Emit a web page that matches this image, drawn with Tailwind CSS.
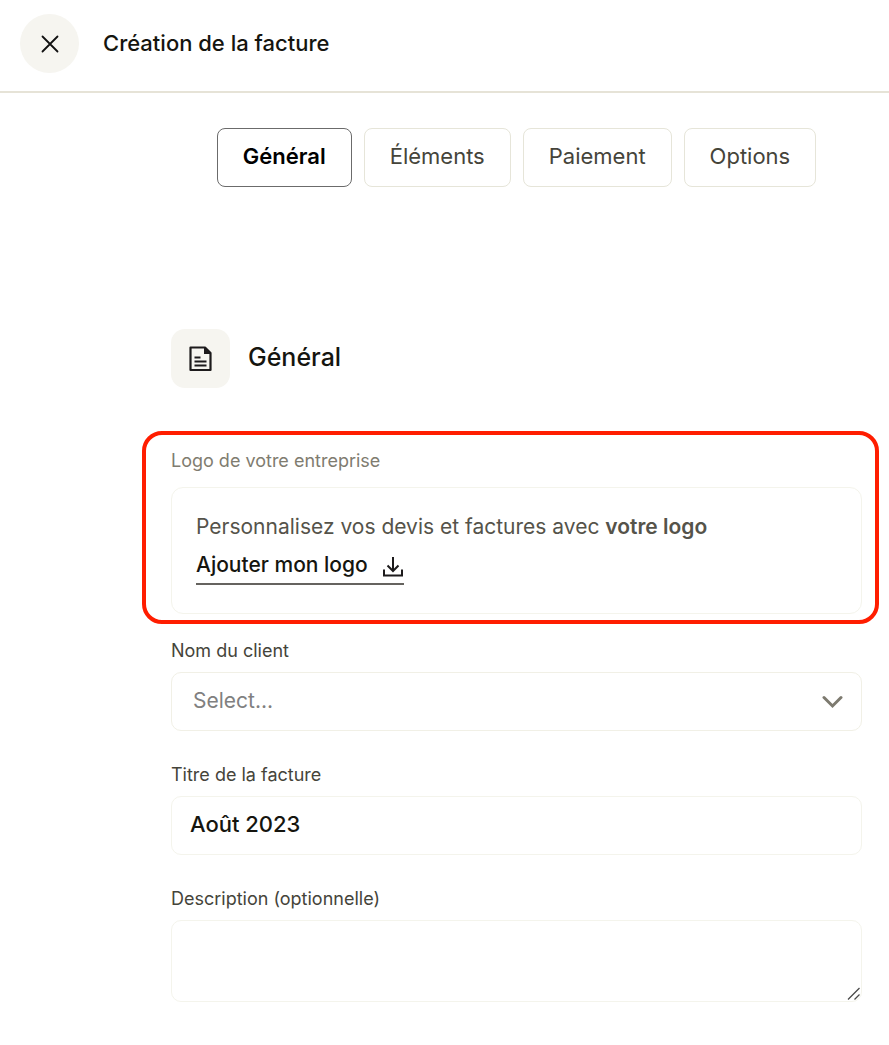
<!DOCTYPE html>
<html lang="fr">
<head>
  <meta charset="UTF-8">
  <meta name="viewport" content="width=device-width, initial-scale=1.0">
  <title>Création de la facture</title>
  <script src="https://cdn.jsdelivr.net/npm/@tailwindcss/browser@4"></script>
</head>
<body class="bg-white min-h-screen font-['Inter',sans-serif] text-[#15150f]">
  <header class="flex items-center gap-6 h-[93px] pl-[20px] pb-[4px] border-b-2 border-[#e6e3d7]">
    <button type="button" aria-label="Fermer" class="flex items-center justify-center size-[59px] rounded-full bg-[#f6f5f0]">
      <svg class="size-[18px]" viewBox="0 0 18 18" fill="none" stroke="#111111" stroke-width="1.8" stroke-linecap="round">
        <path d="M1.5 1.5l15 15M16.5 1.5l-15 15" />
      </svg>
    </button>
    <h1 class="pb-[2px] text-[22px] leading-7 font-medium">Création de la facture</h1>
  </header>

  <main class="pt-[35px] pl-[171px] pr-[27px] pb-[42px]">
    <nav class="flex justify-center gap-3 text-[22px] leading-7 text-[#45443a]">
      <button type="button" class="h-[59px] px-[25px] pb-[3px] rounded-lg border border-[#6b6b6b] font-semibold text-black">Général</button>
      <button type="button" class="h-[59px] px-[25px] pb-[3px] rounded-lg border border-[#e6e5d9]">Éléments</button>
      <button type="button" class="h-[59px] px-[25px] pb-[3px] rounded-lg border border-[#e6e5d9]">Paiement</button>
      <button type="button" class="h-[59px] px-[25px] pb-[3px] rounded-lg border border-[#e6e5d9]">Options</button>
    </nav>

    <div class="flex items-center gap-[18px] mt-[142px]">
      <div class="flex items-center justify-center size-[59px] rounded-[14px] bg-[#f6f5f0]">
        <svg class="w-[23px] h-[26px]" viewBox="0 0 23 26" fill="none" stroke="#1d1b1c" stroke-width="2.2">
          <path d="M1.5 1.5h14.5l5.500 5.500v17h-20z" stroke-linejoin="round" />
          <path d="M15 1v7h7z" fill="#1d1b1c" stroke="none" />
          <path d="M5.500 11.500h6M5.500 15.500h12M5.500 19.500h12" stroke-width="2" />
        </svg>
      </div>
      <h2 class="pb-[4px] text-[25px] leading-8 font-medium">Général</h2>
    </div>

    <!-- Logo -->
    <section class="mt-[43px] -ml-[29px] -mr-[17px] pt-[14px] pl-[25px] pr-[13px] pb-[6px] border-4 border-[#ff1d00] rounded-[20px]">
      <h3 class="text-[18px] leading-6 text-[#7f7c70]">Logo de votre entreprise</h3>
      <div class="mt-[14px] h-[127px] pt-[25px] pl-6 border border-[#f4f4ec] rounded-xl">
        <p class="text-[21px] leading-7 text-[#55534a]">Personnalisez vos devis et factures avec <b class="font-semibold">votre logo</b></p>
        <a href="#" class="inline-flex items-center gap-[14px] mt-[9px] h-[35px] pb-[4px] border-b-2 border-[#65635f] text-[21px] leading-7 font-medium">
          Ajouter mon logo
          <svg class="w-[22px] h-[20px] mt-[4px]" viewBox="0 0 22 20" fill="none" stroke="#1d1b1c" stroke-width="2">
            <path d="M2 12.500v6h18v-6M11 0v13.500M5.500 8.500l5.500 5.500l5.500-5.500" />
          </svg>
        </a>
      </div>
    </section>

    <form class="flex flex-col gap-8 mt-[15px]">
      <div class="flex flex-col gap-[9px]">
        <label for="client" class="text-[18px] leading-6 text-[#45443a]">Nom du client</label>
        <div class="relative">
          <select id="client" class="appearance-none block w-full h-[59px] pl-[21px] pr-12 pb-[2px] border border-[#f1f0e6] rounded-[10px] text-[21px] text-[#808080]">
            <option>Select...</option>
          </select>
          <svg class="absolute right-[19px] top-[23px] w-[21px] h-[14px] pointer-events-none" viewBox="0 0 21 14" fill="none" stroke="#7d7a6f" stroke-width="3" stroke-linecap="round">
            <path d="M2 2.500l8.500 8.500l8.500-8.500" />
          </svg>
        </div>
      </div>
      <div class="flex flex-col gap-[9px]">
        <label for="titre" class="text-[18px] leading-6 text-[#45443a]">Titre de la facture</label>
        <input id="titre" type="text" value="Août 2023" class="w-full h-[59px] px-[18px] pb-[3px] border border-[#f4f4ec] rounded-[10px] text-[22px] font-medium">
      </div>
      <div class="flex flex-col gap-[9px]">
        <label for="description" class="text-[18px] leading-6 text-[#45443a]">Description (optionnelle)</label>
        <div class="relative">
          <textarea id="description" class="block w-full h-[82px] px-[18px] py-3 border border-[#f4f4ec] rounded-[10px] text-[21px] resize-y [&::-webkit-resizer]:bg-transparent [&::-webkit-resizer]:opacity-0"></textarea>
          <svg class="absolute right-[2px] bottom-[2px] size-[13px] pointer-events-none" viewBox="0 0 13 13" fill="none" stroke="#4a4a4a" stroke-width="1.3">
            <path d="M1 12.500L12.500 1M7.500 12.500L12.500 7.500" />
          </svg>
        </div>
      </div>
    </form>
  </main>
</body>
</html>
